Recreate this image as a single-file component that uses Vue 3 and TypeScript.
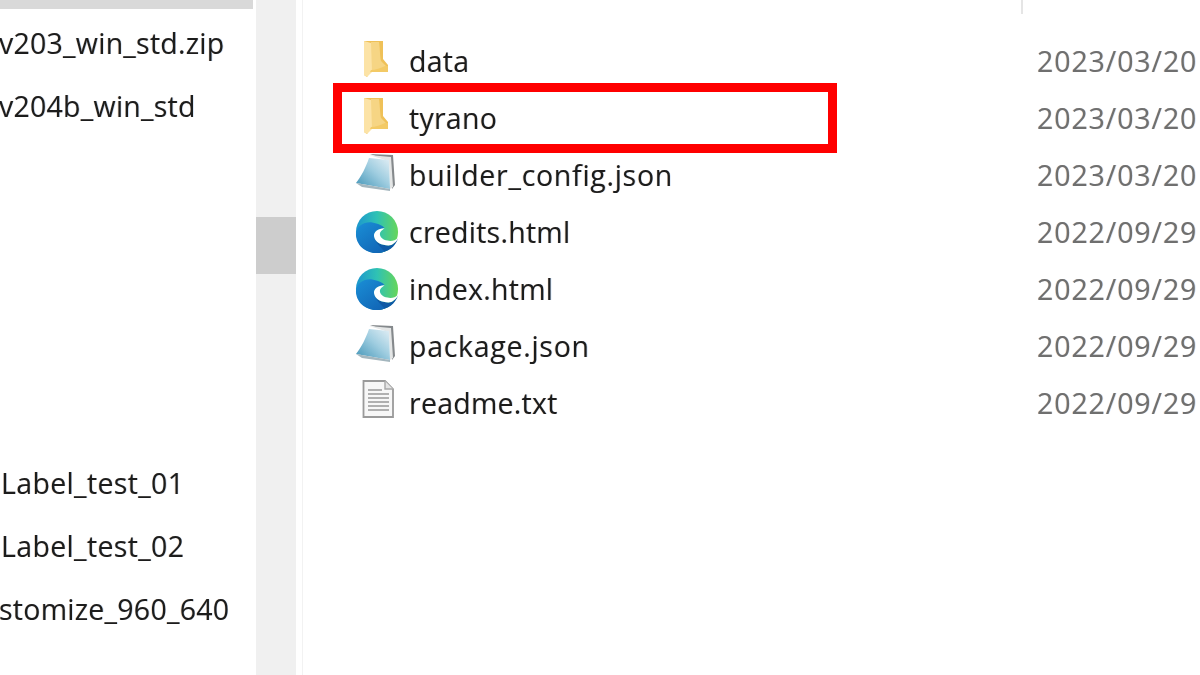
<script setup lang="ts">
interface FileRow { name: string; date: string; kind: 'folder' | 'json' | 'edge' | 'text' }
const tree: string[] = ['v203_win_std.zip', 'v204b_win_std', '', '', '', '', '', 'Label_test_01', 'Label_test_02', 'stomize_960_640']
const files: FileRow[] = [
  { name: 'data', date: '2023/03/20', kind: 'folder' },
  { name: 'tyrano', date: '2023/03/20', kind: 'folder' },
  { name: 'builder_config.json', date: '2023/03/20', kind: 'json' },
  { name: 'credits.html', date: '2022/09/29', kind: 'edge' },
  { name: 'index.html', date: '2022/09/29', kind: 'edge' },
  { name: 'package.json', date: '2022/09/29', kind: 'json' },
  { name: 'readme.txt', date: '2022/09/29', kind: 'text' },
]
</script>

<template>
  <div class="page">
    <aside class="tree">
      <div class="selected"></div>
      <ul class="tree-list">
        <li v-for="(t, i) in tree" :key="i" class="tree-row" :class="{ 'label-row': t.startsWith('Label') }">{{ t }}</li>
      </ul>
    </aside>
    <div class="scrollbar"><div class="thumb"></div></div>
    <main class="main">
      <div class="header-tick"></div>
      <div class="rows">
        <div v-for="f in files" :key="f.name" class="row">
          <span class="icon">
            <svg v-if="f.kind === 'folder'" class="glyph" width="40" height="40" viewBox="0 0 40 40">
              <path d="M9 0 H28 V18 L33 24 V31 H15 L12 36 L9 34 Z" fill="#efc158"/>
              <path d="M16 1 H24 C25 8 25 16 26 20 L32 26 V31 H16 Z" fill="#f6d584"/>
              <path d="M9 0 L16 2 L17 31 L12 36 L9 34 Z" fill="#fce3a6"/>
              <path d="M15 31 H33 V25 L30 25 C26 27 20 29 16 29 Z" fill="#f3ca66"/>
            </svg>
            <svg v-else-if="f.kind === 'json'" class="glyph" width="40" height="40" viewBox="0 0 40 40">
              <defs>
                <linearGradient id="pad" x1="0" y1="1" x2="1" y2="0">
                  <stop offset="0" stop-color="#3f93b6"/>
                  <stop offset="0.55" stop-color="#9fcde0"/>
                  <stop offset="1" stop-color="#e3eff5"/>
                </linearGradient>
              </defs>
              <path d="M15 -1 L38 0 L40 30 L37 34 L35 6 Z" fill="#85898c"/>
              <path d="M14 0 L36 2 L38 32 L35 34 L34 6 Z" fill="#e4e6e6"/>
              <path d="M14 3 L34 5 L35 34 L1 28 C6 22 11 12 14 3 Z" fill="url(#pad)"/>
              <path d="M1 28 L35 34 L35 36 L7 32 Z" fill="#a4b6be"/>
            </svg>
            <svg v-else-if="f.kind === 'edge'" class="glyph" width="44" height="44" viewBox="0 0 46 46">
              <defs>
                <linearGradient id="edgeTop" x1="0" y1="0.5" x2="1" y2="0.5">
                  <stop offset="0" stop-color="#1c96cf"/>
                  <stop offset="0.5" stop-color="#2fc2b4"/>
                  <stop offset="1" stop-color="#66d65a"/>
                </linearGradient>
                <linearGradient id="edgeLeft" x1="0" y1="0" x2="0.7" y2="1">
                  <stop offset="0" stop-color="#1a8fd6"/>
                  <stop offset="1" stop-color="#1268b8"/>
                </linearGradient>
              </defs>
              <circle cx="23" cy="23" r="22" fill="url(#edgeTop)"/>
              <path d="M20 28 C21 34 28 37 35 37 C39 37 43 34 45 29 C43 38 34 45 23 45 C14 45 10 37 20 28 Z" fill="#0e5aa5"/>
              <path d="M1 25 C2 16 10 12 18 13 C24 14 29 16 31 19 C24 19 19 23 20 28 C21 34 26 38 31 43.500 C28 44.500 25 45 23 45 C10 45 1 36 1 25 Z" fill="url(#edgeLeft)"/>
              <path d="M31 19 C24 19 19 23 20 28 C21 34 28 37 35 37 C39 37 43 34 45 29 C42 32 38 33 34 32 C29 31 26 28 26 25 C26 23 28 21 31 19 Z" fill="#ffffff"/>
            </svg>
            <svg v-else class="glyph" width="40" height="40" viewBox="0 0 40 40">
              <path d="M8.500 -2 H30 L38 6 V34 H8.500 Z" fill="#f7f7f7" stroke="#9a9a9a" stroke-width="1.800"/>
              <path d="M30 -2 V6 H38" fill="#e4e4e4" stroke="#a8a8a8" stroke-width="1.400"/>
              <path d="M13 7 H27 M13 11 H34 M13 15 H34 M13 19 H34 M13 23 H34 M13 27 H34" stroke="#b0b0b0" stroke-width="1.800"/>
            </svg>
          </span>
          <span class="name" :class="{ wide: f.kind === 'json' }">{{ f.name }}</span>
          <span class="date">{{ f.date }}</span>
        </div>
        <div class="highlight"></div>
      </div>
    </main>
  </div>
</template>

<style>
html, body { margin: 0; background: #fff; }
</style>

<style scoped>
.page {
  width: 1200px;
  height: 675px;
  overflow: hidden;
  display: flex;
  background: #fff;
  font-family: "Open Sans", "Noto Sans", sans-serif;
  font-size: 28.500px;
}
.tree { width: 256px; flex: none; overflow: hidden; }
.selected { width: 253px; height: 9px; background: #d9d9d9; }
.tree-list { list-style: none; margin: 0; padding: 3px 0 0; }
.tree-row {
  height: 62.860px;
  line-height: 62.860px;
  white-space: nowrap;
  color: #1c1c1c;
  letter-spacing: 0.25px;
  margin-left: -1px;
  filter: blur(0.4px);
  text-shadow: -0.6px 0 rgba(230, 130, 30, 0.3), 0.6px 0 rgba(30, 120, 230, 0.3);
}
.label-row { padding-left: 2px; letter-spacing: 0.35px; }
.scrollbar {
  width: 40px;
  flex: none;
  background: #f0f0f0;
  padding-top: 217px;
  box-sizing: border-box;
}
.thumb { height: 57px; background: #cdcdcd; }
.main {
  flex: 1;
  margin-left: 6px;
  border-left: 1px solid #f2f2f2;
  padding-top: 32px;
  position: relative;
}
.header-tick {
  position: absolute;
  left: 718px;
  top: 0;
  width: 2px;
  height: 14px;
  background: #e5e5e5;
}
.rows { position: relative; }
.row {
  height: 57px;
  display: flex;
  align-items: center;
  white-space: nowrap;
}
.icon {
  width: 106px;
  flex: none;
  display: flex;
  align-items: center;
  padding-left: 52px;
  box-sizing: border-box;
  filter: blur(0.5px);
}
.glyph { overflow: visible; flex: none; }
.name {
  width: 628px;
  flex: none;
  color: #1c1c1c;
  letter-spacing: 0.25px;
  filter: blur(0.4px);
  text-shadow: -0.6px 0 rgba(230, 130, 30, 0.3), 0.6px 0 rgba(30, 120, 230, 0.3);
}
.name.wide { letter-spacing: 0.72px; }
.date {
  color: #6f6f6f;
  letter-spacing: 0.9px;
  filter: blur(0.4px);
  text-shadow: -0.6px 0 rgba(230, 130, 30, 0.25), 0.6px 0 rgba(30, 120, 230, 0.25);
}
.highlight {
  position: absolute;
  left: 30px;
  top: 51px;
  width: 504px;
  height: 70px;
  box-sizing: border-box;
  border: 9px solid #ff0000;
}
</style>
